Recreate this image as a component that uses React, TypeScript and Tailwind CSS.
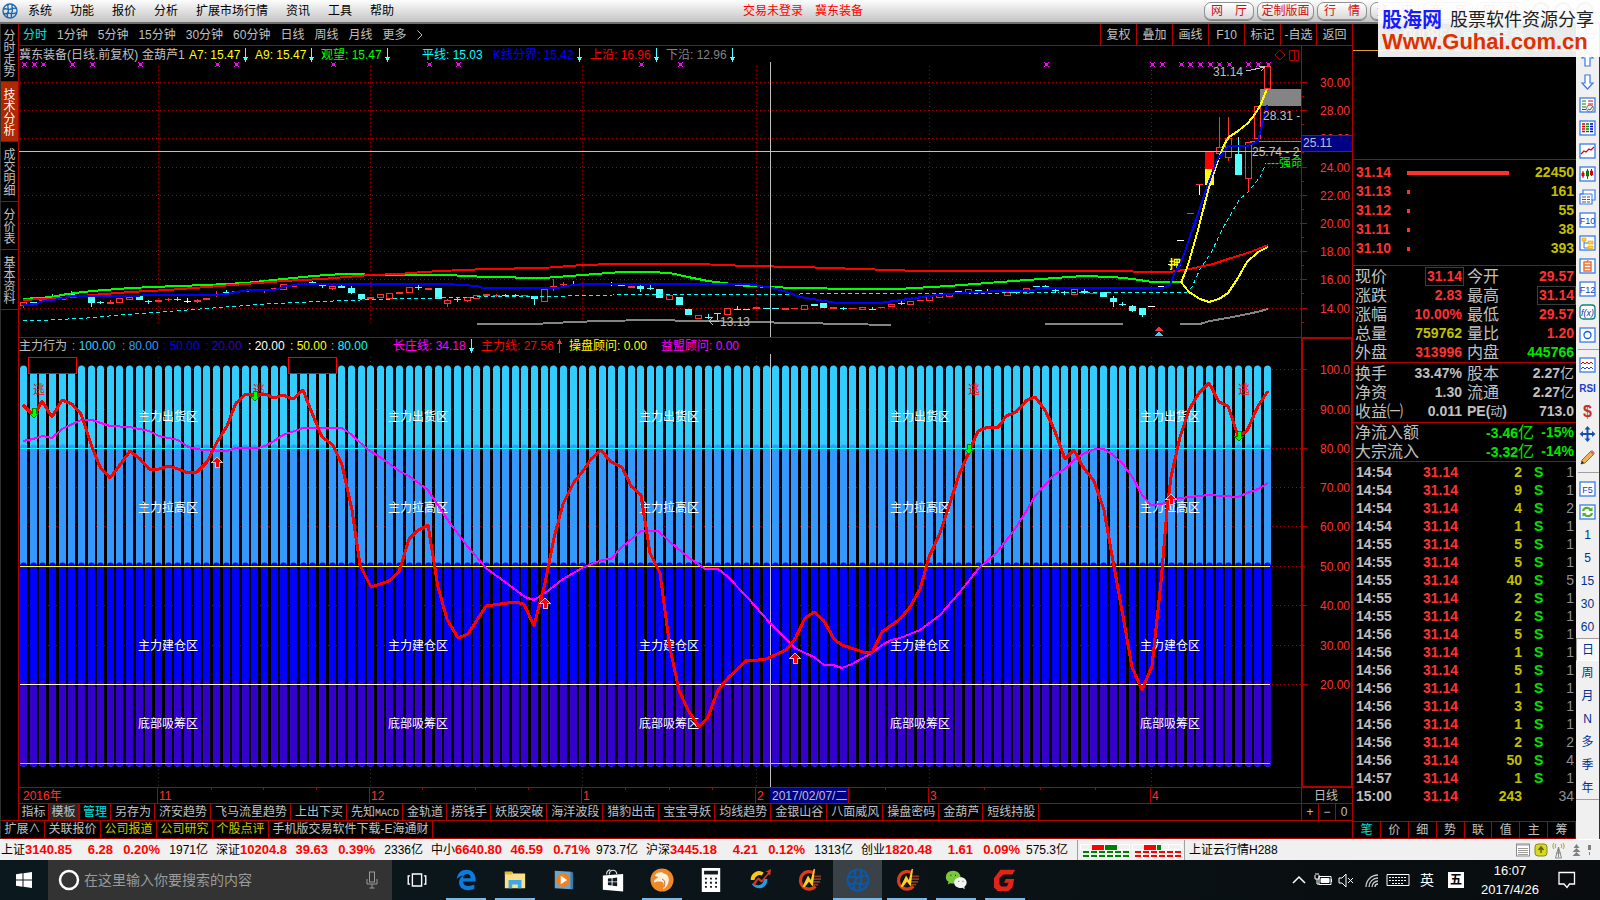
import React from "react";

const FONT = "font-['Liberation_Sans','Noto_Sans_CJK_SC',sans-serif]";

/* ---------- data ---------- */
const menus = ["系统", "功能", "报价", "分析", "扩展市场行情", "资讯", "工具", "帮助"];
const periods = ["分时", "1分钟", "5分钟", "15分钟", "30分钟", "60分钟", "日线", "周线", "月线", "更多"];
const chartTools = ["复权", "叠加", "画线", "F10", "标记", "-自选", "返回"];
const sideTabs = [
  { t: "分时走势", h: "h-[58px]", on: false },
  { t: "技术分析", h: "h-[60px]", on: true },
  { t: "成交明细", h: "h-[60px]", on: false },
  { t: "分价表", h: "h-[48px]", on: false },
  { t: "基本资料", h: "h-[60px]", on: false },
];
const templates = ["另存为", "济安趋势", "飞马流星趋势", "上出下买", "先知MACD", "金轨道", "捞钱手", "妖股突破", "海洋波段", "猎豹出击", "宝宝寻妖", "均线趋势", "金银山谷", "八面威风", "操盘密码", "金葫芦", "短线持股"];
const extras = [
  { t: "扩展∧", c: "text-[#c0c0c0] w-[44px]" },
  { t: "关联报价", c: "text-[#c0c0c0] w-[56px]" },
  { t: "公司报道", c: "text-[#c8c800] w-[56px]" },
  { t: "公司研究", c: "text-[#c8c800] w-[56px]" },
  { t: "个股点评", c: "text-[#c8c800] w-[56px]" },
  { t: "手机版交易软件下载-E海通财", c: "text-[#c0c0c0] w-[164px]" },
];
type Dir = "up" | "down" | undefined;
const topLegend: { t: string; c: string; d?: Dir }[] = [
  { t: "冀东装备(日线.前复权)", c: "w-[123px] text-[#c0c0c0]" },
  { t: "金葫芦1", c: "w-[47px] text-[#c0c0c0]" },
  { t: "A7: 15.47", c: "w-[66px] text-[#ffff00]", d: "down" },
  { t: "A9: 15.47", c: "w-[66px] text-[#ffff00]", d: "down" },
  { t: "观望: 15.47", c: "w-[101px] text-[#00ff00]", d: "down" },
  { t: "平线: 15.03", c: "w-[71px] text-[#00ffff]" },
  { t: "K线分界: 15.42", c: "w-[97px] text-[#0000ff]", d: "down" },
  { t: "上沿: 16.96", c: "w-[76px] text-[#ff0000]", d: "down" },
  { t: "下沿: 12.96", c: "w-[76px] text-[#848484]", d: "down" },
];
const lowLegend: { t: string; c: string; d?: Dir }[] = [
  { t: "主力行为", c: "w-[53px] text-[#c0c0c0]" },
  { t: ": 100.00", c: "w-[50px] text-[#33ccff]" },
  { t: ": 80.00", c: "w-[41px] text-[#3399ff]" },
  { t: ": 50.00", c: "w-[42px] text-[#0000ff]" },
  { t: ": 20.00", c: "w-[43px] text-[#3300cc]" },
  { t: ": 20.00", c: "w-[42px] text-[#ffffff]" },
  { t: ": 50.00", c: "w-[41px] text-[#ffff00]" },
  { t: ": 80.00", c: "w-[62px] text-[#00ffff]" },
  { t: "长庄线: 34.18", c: "w-[88px] text-[#ff00ff]", d: "down" },
  { t: "主力线: 27.56", c: "w-[88px] text-[#ff0000]", d: "up" },
  { t: "操盘顾问: 0.00", c: "w-[92px] text-[#ffff00]" },
  { t: "益盟顾问: 0.00", c: "w-[92px] text-[#ff00ff]" },
];

const book: [string, string, string][] = [
  ["31.14", "22450", "w-[102px]"],
  ["31.13", "161", "w-[3px]"],
  ["31.12", "55", "w-[3px]"],
  ["31.11", "38", "w-[3px]"],
  ["31.10", "393", "w-[3px]"],
];
const R = "text-[#ff3232]", Y = "text-[#c0c000]", G = "text-[#00e600]", W = "text-[#c0c0c0]";
const quotes: [string, string, string, boolean][] = [
  ["现价", "31.14", R, true], ["今开", "29.57", R, false],
  ["涨跌", "2.83", R, false], ["最高", "31.14", R, true],
  ["涨幅", "10.00%", R, false], ["最低", "29.57", R, false],
  ["总量", "759762", Y, false], ["量比", "1.20", R, false],
  ["外盘", "313996", R, false], ["内盘", "445766", G, false],
];
const basics: [string, string][] = [
  ["换手", "33.47%"], ["股本", "2.27亿"],
  ["净资", "1.30"], ["流通", "2.27亿"],
  ["收益㈠", "0.011"], ["PE(动)", "713.0"],
];
const ticks: [string, string, string, string][] = [
  ["14:54", "2", "S", "1"], ["14:54", "9", "S", "1"], ["14:54", "4", "S", "2"], ["14:54", "1", "S", "1"],
  ["14:55", "5", "S", "1"], ["14:55", "5", "S", "1"], ["14:55", "40", "S", "5"], ["14:55", "2", "S", "1"],
  ["14:55", "2", "S", "1"], ["14:56", "5", "S", "1"], ["14:56", "1", "S", "1"], ["14:56", "5", "S", "1"],
  ["14:56", "1", "S", "1"], ["14:56", "3", "S", "1"], ["14:56", "1", "S", "1"], ["14:56", "2", "S", "2"],
  ["14:56", "50", "S", "4"], ["14:57", "1", "S", "1"], ["15:00", "243", "", "34"],
];
const indices: string[][] = [
  ["上证", "3140.85", "6.28", "0.20%", "1971亿"],
  ["深证", "10204.8", "39.63", "0.39%", "2336亿"],
  ["中小", "6640.80", "46.59", "0.71%", "973.7亿"],
  ["沪深", "3445.18", "4.21", "0.12%", "1313亿"],
  ["创业", "1820.48", "1.61", "0.09%", "575.3亿"],
];

/* ---------- chart series ---------- */
const upperBand = "23,300 62,298 92,295 130,292 168,290 207,287 245,284 283,281 322,279 370,275 400,274 410,273 440,271 487,269 543,268 583,265 613,264 698,264 747,266 800,267 860,269 920,271 1000,271 1123,271 1143,272 1170,272 1190,269 1213,264 1228,259 1248,253 1268,245";
const greenLine = "23,299 52,297 67,294 92,291 130,288 177,286 207,285 245,283 283,279 313,276 342,274 360,274 370,275 390,275 447,275 487,277 543,278 583,275 622,272 650,272 670,273 688,277 708,281 747,286 773,287 793,288 860,289 898,289 949,286 1000,282 1027,280 1055,278 1083,276 1113,277 1133,279 1152,282 1181,282";
const blueLine = "23,305 33,305 43,301 60,299 72,296 213,295 227,294 236,292 250,290 275,290 283,287 300,284 370,284 447,284 477,286 483,288 557,288 573,285 583,284 747,284 773,288 790,293 800,297 837,303 880,303 929,296 959,293 1000,291 1027,291 1043,288 1163,288 1170,285 1173,277 1182,260 1193,228 1205,193 1217,160 1228,146 1248,146 1258,141 1267,105";
const yellowUp = "1181,283 1188,265 1198,230 1209,187 1218,160 1225,143 1229,137 1238,131 1248,123 1255,114 1260,106 1267,89";
const yellowLow = "1181,282 1189,292 1200,299 1209,302 1219,299 1228,293 1238,278 1247,262 1258,252 1268,247";
const flatLine = "23,320 50,320 87,318 120,315 147,313 187,310 213,308 240,306 267,304 307,302 360,300 393,299 477,297 507,296 567,296 613,295 657,294 800,294 1000,293 1060,292 1187,292 1192,287 1200,269 1211,253 1222,230 1228,219 1239,200 1249,191 1260,177 1266,163";
const lowerBands = [
  "477,324 533,324 573,322 602,321 650,320 747,322 800,323 891,325",
  "1045,324 1123,324",
  "1180,324 1200,324 1210,321 1233,317 1257,312 1268,309",
];
const mainForce = "23,405 34,416 42,401 52,417 62,400 72,404 81,414 92,447 100,467 110,478 120,465 130,451 140,459 149,469 159,469 169,466 178,469 188,473 197,472 207,462 217,442 227,426 236,403 246,394 255,395 265,394 274,398 283,395 293,399 303,390 312,413 322,437 333,445 342,465 352,510 360,565 371,587 389,581 399,572 409,539 417,531 428,525 438,587 447,619 458,638 468,634 486,606 515,602 524,604 534,626 545,583 554,538 563,504 574,482 583,471 591,459 601,450 611,462 622,467 631,486 641,495 650,553 660,573 670,648 679,690 688,710 699,727 708,717 718,690 729,677 747,660 758,660 766,659 786,650 795,639 805,618 814,612 824,621 834,639 842,645 863,652 872,653 882,632 900,619 910,607 920,589 929,557 940,533 950,503 959,475 969,452 978,431 988,427 997,428 1000,425 1006,416 1016,412 1027,400 1035,397 1045,410 1054,429 1065,459 1074,450 1083,467 1094,481 1104,510 1113,561 1123,616 1132,667 1142,690 1152,666 1161,582 1167,510 1171,477 1180,437 1189,410 1199,393 1209,383 1219,402 1228,406 1238,436 1247,431 1258,406 1268,391";
const longForce = "23,441 33,439 43,436 52,438 62,429 81,420 92,420 110,426 130,427 149,431 159,436 178,440 188,447 202,450 227,451 236,448 258,448 265,446 274,441 283,435 303,428 342,428 352,435 367,449 380,457 399,471 409,476 428,490 447,519 468,547 486,568 505,582 525,597 534,600 545,593 563,579 582,568 602,560 611,559 622,547 641,531 658,531 670,542 688,557 705,569 718,569 727,576 747,597 770,623 786,639 795,648 805,653 814,657 824,665 833,665 842,668 852,664 872,653 882,645 891,640 900,638 920,630 940,615 959,593 979,568 996,553 1013,532 1027,510 1035,496 1054,475 1065,469 1074,460 1083,454 1095,449 1104,449 1113,455 1123,464 1133,478 1142,495 1151,505 1162,504 1170,501 1180,498 1209,495 1238,497 1247,493 1258,489 1268,483";

/* [bar, open-top, close-bottom, kind, wick top, wick bottom]; h hollow, r red, c cyan, w white */
type Candle = [number, number, number, "h" | "r" | "c" | "w", number?, number?];
const candles: Candle[] = [
  [0, 302, 305, "h", 302, 308], [1, 302, 303, "c"], [2, 299, 301, "r"], [3, 296, 298, "c", 294, 299], [4, 298, 300, "r"], [5, 294, 295, "c", 291, 296],
  [7, 296, 303, "c", 296, 307], [8, 302, 303, "c", 301, 304], [9, 302, 304, "r", 300, 304], [10, 298, 302, "h"], [11, 297, 299, "h"], [12, 296, 300, "c"],
  [13, 301, 302, "c", 300, 304], [14, 300, 302, "r"], [15, 299, 300, "r", 298, 301], [16, 299, 300, "c", 297, 301], [17, 301, 302, "w", 298, 303], [18, 300, 302, "r", 299, 303],
  [19, 298, 300, "r"], [20, 295, 296, "r", 291, 297], [21, 292, 293, "c", 290, 295], [22, 291, 293, "r"], [23, 290, 292, "r"], [24, 289, 290, "c"], [25, 290, 291, "r", 289, 293],
  [26, 288, 289, "r"], [27, 284, 289, "h"], [28, 285, 287, "r"], [29, 283, 284, "r"], [30, 282, 284, "c", 281, 285], [31, 285, 286, "c", 284, 288], [32, 286, 288, "h", 286, 290],
  [33, 286, 288, "c", 285, 288], [34, 288, 293, "c", 286, 294], [35, 294, 299, "c"], [36, 297, 299, "r"], [37, 294, 297, "h"], [38, 293, 298, "h"], [39, 292, 294, "r"],
  [40, 287, 292, "h"], [41, 287, 288, "c", 285, 290], [42, 288, 290, "r"], [43, 288, 299, "c"], [44, 300, 303, "h", 299, 307],
  [45, 299, 300, "c", 297, 302], [46, 297, 300, "h", 297, 302], [47, 295, 298, "h"], [48, 294, 296, "r"], [49, 295, 296, "r", 294, 297], [50, 295, 296, "c", 294, 297], [51, 295, 296, "c", 294, 297], [52, 295, 296, "r"],
  [53, 296, 299, "c", 296, 305], [54, 289, 301, "h"], [55, 286, 287, "r", 279, 291], [56, 284, 285, "r", 282, 286], [57, 284, 285, "c", 281, 286], [60, 283, 284, "r"], [61, 283, 284, "w", 282, 286], [62, 285, 286, "c"],
  [63, 286, 288, "r"], [64, 286, 289, "c", 285, 292], [65, 288, 289, "c", 285, 290], [66, 289, 298, "c"], [67, 295, 299, "h", 295, 300], [68, 297, 305, "c"], [69, 309, 315, "c"], [70, 315, 318, "h"],
  [71, 317, 318, "c", 314, 319], [72, 313, 314, "c", 313, 320], [73, 308, 314, "h", 308, 315], [74, 309, 310, "c", 306, 310], [75, 309, 310, "c"], [76, 307, 309, "r"], [77, 308, 309, "c"], [78, 308, 309, "c"],
  [79, 308, 310, "r"], [80, 308, 309, "r"], [81, 305, 309, "h"], [82, 304, 306, "c"], [83, 303, 308, "c"], [84, 307, 309, "r"], [85, 308, 309, "c", 307, 310], [86, 308, 309, "r"], [87, 307, 309, "h"],
  [88, 309, 310, "c", 307, 310], [89, 307, 308, "r"], [90, 304, 306, "h"], [91, 303, 304, "c", 301, 305], [92, 301, 304, "h"], [93, 300, 301, "r"], [94, 296, 300, "h"], [95, 294, 297, "h"], [96, 293, 296, "h"],
  [97, 291, 293, "c"], [98, 289, 292, "h"], [99, 290, 291, "c"], [100, 291, 292, "c", 289, 293], [101, 290, 292, "r"], [102, 292, 295, "h"], [103, 292, 293, "c", 291, 294], [104, 288, 293, "h"], [105, 286, 287, "c"],
  [106, 286, 287, "c", 285, 288], [107, 290, 291, "c", 289, 293], [108, 292, 293, "c", 291, 295], [109, 289, 294, "h"], [110, 291, 293, "c", 289, 294], [111, 293, 294, "r", 292, 294], [112, 292, 297, "c"],
  [113, 298, 302, "c", 296, 307], [114, 304, 305, "c", 302, 306], [115, 306, 311, "c", 305, 312], [116, 308, 315, "c", 308, 317], [117, 306, 307, "w"], [118, 286, 287, "w"], [119, 264, 265, "w"], [120, 240, 241, "w"],
  [121, 213, 214, "r"], [122, 184, 185, "r"], [124, 147, 153, "h", 117, 157], [125, 138, 157, "h", 117, 161], [126, 154, 175, "c", 137, 175], [127, 142, 178, "h", 142, 191], [128, 106, 138, "h"], [129, 66, 88, "h"],
];
const barX = (i: number) => Math.round(23 + i * 9.643);
const marks = [24, 34, 43, 72, 92, 140, 217, 236, 333, 429, 458, 641, 680, 1046, 1152, 1162, 1181, 1190, 1200, 1210, 1219, 1229, 1248, 1258, 1268];
const monthX = [158, 370, 582, 756, 929, 1151];
const priceLevels: [number, string][] = [[82, "30.00"], [110, "28.00"], [138, "26.00"], [167, "24.00"], [195, "22.00"], [223, "20.00"], [251, "18.00"], [279, "16.00"], [308, "14.00"]];
const scoreLevels: [number, string][] = [[369, "100.0"], [409, "90.00"], [448, "80.00"], [487, "70.00"], [526, "60.00"], [566, "50.00"], [605, "40.00"], [645, "30.00"], [684, "20.00"]];
const zones: [number, string][] = [[421, "主力出货区"], [512, "主力拉高区"], [650, "主力建仓区"], [728, "底部吸筹区"]];
const kindColor = { h: "#ff3232", r: "#ff3232", c: "#54ffff", w: "#ffffff" };

/* ---------- small parts ---------- */
function Arrow({ d }: { d: Dir }) {
  if (!d) return null;
  return d === "down" ? (
    <svg viewBox="0 0 5 14" className="ml-[3px] h-[14px] w-[5px] shrink-0" shapeRendering="crispEdges" aria-hidden="true">
      <path d="M2 0h1v9h2v1h-1v2h-1v2h-1v-2h-1v-2h-1v-1h2z" fill="#54ffff" />
    </svg>
  ) : (
    <svg viewBox="0 0 5 14" className="ml-[3px] h-[14px] w-[5px] shrink-0" shapeRendering="crispEdges" aria-hidden="true">
      <path d="M2 14h1v-9h2v-1h-1v-2h-1v-2h-1v2h-1v2h-1v1h2z" fill="#ff3232" />
    </svg>
  );
}

function Legend({ items }: { items: { t: string; c: string; d?: Dir }[] }) {
  return (
    <div className="flex min-w-0 flex-1 items-center overflow-hidden text-xs leading-4 whitespace-nowrap">
      {items.map((l, i) => (
        <span key={i} className={"flex shrink-0 items-center " + l.c}>{l.t}<Arrow d={l.d} /></span>
      ))}
    </div>
  );
}

function HaitongLogo({ className, color }: { className: string; color: string }) {
  return (
    <svg viewBox="0 0 24 24" className={className} fill="none" stroke={color} strokeWidth="2" aria-hidden="true">
      <circle cx="12" cy="12" r="10.5" />
      <path d="M9.500 2c-2.500 4 1 6 0 10s-3 6-1 9.500M15.500 2.500c-2 4 1 6 0 9.500s-3 6-1 10M2 9.500c4-2.500 6 1 10 0s6-3 10-1M2 15.500c4 2 6-1 10 0s6 1 9.500-1" />
    </svg>
  );
}

function PriceChart() {
  return (
    <svg viewBox="19 62 1334 275" className="block h-auto w-full" fontSize="12" shapeRendering="crispEdges" role="img" aria-label="日线">
      <g stroke="#b00000" strokeDasharray="1 3">
        {priceLevels.map(([y]) => <line key={y} x1="20" x2="1301" y1={y + 0.5} y2={y + 0.5} />)}
        {monthX.map((x) => <line key={x} x1={x + 0.5} x2={x + 0.5} y1="66" y2="324" />)}
      </g>
      <rect x="1260" y="89" width="41" height="17" fill="#848484" />
      <line x1="1250" x2="1301" y1="141.5" y2="141.5" stroke="#848484" />
      {marks.map((x) => (
        <path key={x} d={`M${x - 2} 62h1v1h-1zM${x + 2} 62h1v1h-1zM${x - 1} 63h3v3h-3zM${x - 2} 66h1v1h-1zM${x + 2} 66h1v1h-1z`} fill="#ff00ff" />
      ))}
      {lowerBands.map((p) => <polyline key={p} points={p} fill="none" stroke="#848484" strokeWidth="2" />)}
      {candles.map(([i, a, b, k, wt, wb]) => {
        const x = barX(i);
        const c = kindColor[k];
        return (
          <g key={i}>
            {wt !== undefined && wb !== undefined && (
              <>
                <line x1={x + 0.5} x2={x + 0.5} y1={wt} y2={a} stroke={c} />
                <line x1={x + 0.5} x2={x + 0.5} y1={b} y2={wb} stroke={c} />
              </>
            )}
            {k === "h" ? (
              <rect x={x - 2.5} y={a + 0.5} width="6" height={b - a} fill="none" stroke={c} />
            ) : (
              <rect x={x - 3} y={a} width="7" height={b - a} fill={c} />
            )}
          </g>
        );
      })}
      <rect x="1205" y="152" width="9" height="17" fill="#ff0000" />
      <rect x="1205" y="169" width="9" height="16" fill="#ffff00" />
      <line x1="1199.5" x2="1199.5" y1="185" y2="195" stroke="#fff" />
      <text x="1169" y="269" fill="#ffff00" fontWeight="700">押</text>
      <g fill="none" strokeWidth="2">
        <polyline points={flatLine} stroke="#00ffff" strokeWidth="1" strokeDasharray="4 3" />
        <polyline points={greenLine} stroke="#00ff00" />
        <polyline points={upperBand} stroke="#ff0000" />
        <polyline points={yellowLow} stroke="#ffff00" />
        <polyline points={yellowUp} stroke="#ffff00" />
        <polyline points={blueLine} stroke="#0000ff" />
      </g>
      <line x1="19" x2="1301" y1="151.5" y2="151.5" stroke="#c0c0c0" />
      <line x1="770.5" x2="770.5" y1="62" y2="337" stroke="#c0c0c0" />
      <g fill="#c0c0c0">
        <text x="1213" y="76">31.14</text>
        <text x="1263" y="120">28.31 -</text>
        <text x="1252" y="156">25.74 - 2</text>
        <text x="720" y="326">13.13</text>
      </g>
      <g stroke="#c0c0c0" fill="none">
        <path d="M1246 71l19-4M1259 66l6 1l-4 4" />
        <path d="M709 321h10M713 317l-4 4l4 4" />
      </g>
      <text x="1267" y="167" fill="#00ff00">---强命</text>
      <path d="M1155 331l4-5l4 5z" fill="#ff3232" />
      <path d="M1155 336l4-5l4 5z" fill="#33ccff" />
      <rect x="1302" y="62" width="50" height="275" fill="#000" />
      <g stroke="#b00000">
        <line x1="1301.5" x2="1301.5" y1="62" y2="337" />
        <line x1="1352.5" x2="1352.5" y1="62" y2="337" />
        {priceLevels.map(([y]) => (
          <path key={y} d={`M1301 ${y + 0.5}h6M1301 ${y + 14.5}h3`} />
        ))}
      </g>
      <g fill="#ff3232" textAnchor="end">
        {priceLevels.map(([y, t]) => <text key={t} x="1350" y={y + 5}>{t}</text>)}
      </g>
      <rect x="1301.5" y="135.5" width="51" height="16" fill="#000084" stroke="#b00000" />
      <text x="1303" y="147" fill="#c0c0c0">25.11</text>
    </svg>
  );
}

function ForceChart() {
  const bars = Array.from({ length: 130 }, (_, i) => barX(i) + 0.5);
  const layers: [number, string][] = [[369, "#33ccff"], [448, "#3399ff"], [566, "#0000ff"], [684, "#3300cc"]];
  const minor = [211, 263, 316, 422, 475, 528, 625, 669, 712, 885, 984, 1040, 1095];
  const months = ["11", "12", "1", "2", "3", "4"];
  return (
    <svg viewBox="19 354 1334 449" className="block h-auto w-full" fontSize="12" shapeRendering="crispEdges" role="img" aria-label="主力行为">
      <g stroke="#b00000" strokeDasharray="1 3">
        {scoreLevels.map(([y]) => <line key={y} x1="20" x2="1301" y1={y + 0.5} y2={y + 0.5} />)}
        {monthX.map((x) => <line key={x} x1={x + 0.5} x2={x + 0.5} y1="357" y2="787" />)}
      </g>
      {layers.map(([y, c]) => (
        <g key={c} stroke={c} strokeWidth="7" strokeLinecap="round" shapeRendering="geometricPrecision">
          {bars.map((x) => <line key={x} x1={x} x2={x} y1={y} y2="763" />)}
        </g>
      ))}
      <line x1="20" x2="1270" y1="448.5" y2="448.5" stroke="#00ffff" />
      <line x1="20" x2="1270" y1="566.5" y2="566.5" stroke="#ffff00" />
      <line x1="20" x2="1270" y1="684.5" y2="684.5" stroke="#ffffff" />
      <line x1="20" x2="1270" y1="763.5" y2="763.5" stroke="#c0c0c0" />
      <rect x="28.5" y="357.5" width="48" height="16" fill="#000" stroke="#ff0000" />
      <rect x="288.5" y="357.5" width="48" height="16" fill="#000" stroke="#ff0000" />
      <g fill="#ffffff">
        {[138, 388, 639, 890, 1140].map((x) => zones.map(([y, t]) => <text key={x + t} x={x} y={y}>{t}</text>))}
      </g>
      <g fill="#ff0000">
        {[33, 253, 968, 1238].map((x) => <text key={x} x={x} y="394">逃</text>)}
      </g>
      <line x1="770.5" x2="770.5" y1="354" y2="787" stroke="#c0c0c0" />
      <polyline points={longForce} fill="none" stroke="#ff00ff" strokeWidth="2" />
      <polyline points={mainForce} fill="none" stroke="#ff0000" strokeWidth="3" strokeLinejoin="round" />
      {[[34, 413], [255, 396], [969, 449], [1239, 436]].map(([x, y]) => (
        <path key={x} d={`M${x - 2} ${y - 5}h4v5h3l-5 5l-5 -5h3z`} fill="#00ff00" stroke="#008000" />
      ))}
      {[[217, 462], [545, 603], [795, 658], [1171, 499]].map(([x, y]) => (
        <path key={x} d={`M${x - 2} ${y + 5}h4v-5h3l-5 -5l-5 5h3z`} fill="#ff0000" stroke="#e0c0c0" />
      ))}
      <g stroke="#b00000">
        <line x1="1302" x2="1302" y1="354" y2="788" strokeWidth="2" />
        <line x1="1352" x2="1352" y1="354" y2="788" strokeWidth="2" />
        <line x1="1301" x2="1353" y1="787" y2="787" strokeWidth="2" />
        {scoreLevels.map(([y], i) => <path key={y} d={`M1303 ${y + 0.5}h${i % 2 ? 2 : 4}`} />)}
        <line x1="19" x2="1353" y1="787.5" y2="787.5" />
        <line x1="1301.5" x2="1301.5" y1="787" y2="803" />
        <line x1="1352.5" x2="1352.5" y1="787" y2="803" />
        {monthX.map((x) => <line key={x} x1={x - 0.5} x2={x - 0.5} y1="787" y2="803" />)}
        {minor.map((x) => <line key={x} x1={x + 0.5} x2={x + 0.5} y1="787" y2="790" />)}
      </g>
      <g fill="#ff3232" textAnchor="end">
        {scoreLevels.map(([y, t]) => <text key={t} x="1350" y={y + 5}>{t}</text>)}
      </g>
      <rect x="770" y="788" width="78" height="15" fill="#000084" />
      <line x1="848.5" x2="848.5" y1="787" y2="803" stroke="#b00000" />
      <text x="772" y="800" fill="#c0c0c0">2017/02/07/二</text>
      <g fill="#ff3232">
        <text x="23" y="800">2016年</text>
        {months.map((m, i) => <text key={m} x={monthX[i] + 1} y="800">{m}</text>)}
      </g>
      <text x="1326" y="800" fill="#c0c0c0" textAnchor="middle">日线</text>
    </svg>
  );
}

/* ---------- right tool strip ---------- */
const Frame = ({ children }: { children?: React.ReactNode }) => (
  <>
    <rect x="1" y="1" width="15" height="14" fill="#fff" stroke="#3a7be8" strokeWidth="1.3" />
    {children}
  </>
);
const label = (t: string) => (
  <Frame><text x="8.5" y="11.5" fontSize="9" textAnchor="middle" fill="#1040c0">{t}</text></Frame>
);
const outline = { fill: "#fff", stroke: "#3a7be8", strokeWidth: 1.2 };
const stripTop: [string, React.ReactNode][] = [
  ["后退", <path d="M1 8l6-6v3.500h8v5h-8v3.500z" {...outline} />],
  ["上移", <path d="M8.500 1l5.500 6h-3v8h-5v-8h-3z" {...outline} />],
  ["下移", <path d="M8.500 15l5.500-6h-3v-8h-5v8h-3z" {...outline} />],
  ["列表", <Frame><path d="M3 4h4M3 7h4M3 10h4M3 12.500h4" stroke="#008000" /><path d="M9 4h5M9 7h5" stroke="#e00000" /><circle cx="11" cy="11.500" r="3.500" fill="#eee" stroke="#777" /><path d="M9 12l2 1l3-4" stroke="#555" fill="none" /></Frame>],
  ["报价", <Frame><path d="M3 4h3M3 6.500h3M3 9h3M3 11.500h3" stroke="#e00000" strokeWidth="1.400" /><path d="M7 4h3M7 6.500h3M7 9h3M7 11.500h3" stroke="#008000" strokeWidth="1.400" /><path d="M11 4h3M11 6.500h3M11 9h3M11 11.500h3" stroke="#0000e0" strokeWidth="1.400" /></Frame>],
  ["走势", <Frame><path d="M2 11l3-3l2 1l3-3l2 1l3-3" stroke="#e00000" strokeWidth="1.200" fill="none" /></Frame>],
  ["K线", <Frame><path d="M4 5v7M12.500 3v7" stroke="#e00000" /><path d="M8.500 3v10" stroke="#008000" /><path d="M3 7h2v3h-2zM11.500 5h2v4h-2z" fill="#e00000" stroke="#e00000" /><path d="M7.500 5h2v5h-2z" fill="#008000" stroke="#008000" /></Frame>],
  ["资讯", <><path d="M4 1h12v10h-3v4h-12v-10h3z" {...outline} /><path d="M1 5h12v6" fill="none" stroke="#3a7be8" /><path d="M3 8h4M8 8h3M3 10.500h4M8 10.500h3M3 13h4M8 13h3" stroke="#555" /></>],
  ["F10", label("F10")],
  ["目录", <Frame><path d="M5 5v8h4M5 8h4" stroke="#3a7be8" fill="none" /><path d="M3 3h4v3h-4zM9 6h5v3h-5zM9 11h5v2.500h-5z" fill="#ffd040" stroke="#e0a000" strokeWidth=".6" /></Frame>],
  ["自选", <Frame><path d="M5 4h7v9h-7zM5 7h7M5 10h7M8 4l1-2" stroke="#f07030" strokeWidth="1.500" fill="none" /></Frame>],
  ["F12", label("F12")],
  ["函数", <><rect x="1" y="1" width="15" height="14" rx="3" fill="#fff" stroke="#108080" strokeWidth="1.300" /><text x="8.500" y="11.500" fontSize="9" fontStyle="italic" textAnchor="middle" fill="#1030b0">f(x)</text></>],
  ["圆", <Frame><circle cx="8.500" cy="8" r="3.500" fill="none" stroke="#1060d0" strokeWidth="1.300" /></Frame>],
];
const stripMid: [string, React.ReactNode][] = [
  ["指标", <Frame><path d="M2 7l2-2l2 2l2-2l2 2l2-2l2 2" stroke="#e00000" fill="none" /><path d="M2 12l2-2l2 2l2-2l2 2l2-2l2 2" stroke="#2040e0" fill="none" /></Frame>],
  ["RSI", <text x="8.500" y="12" fontSize="10" fontWeight="700" textAnchor="middle" fill="#2040d0">RSI</text>],
  ["资金", <><text x="9.500" y="14.500" fontSize="16" fontWeight="700" textAnchor="middle" fill="#808080" aria-hidden="true" opacity="0" /><text x="8.500" y="14" fontSize="16" fontWeight="700" textAnchor="middle" fill="#c03030">$</text></>],
  ["移动", <path d="M8.500 0l3 3.500h-2v3.500h3.500v-2l3.500 3l-3.500 3v-2h-3.500v3.500h2l-3 3.500l-3-3.500h2v-3.500h-3.500v2l-3.500-3l3.500-3v2h3.500v-3.500h-2z" fill="#1850b0" />],
  ["画线", <><path d="M2 15l1-4l9-9l3 3l-9 9z" fill="#f0b050" stroke="#805020" strokeWidth=".8" /><path d="M11 3l2-2l3 3l-2 2z" fill="#d07070" /><path d="M2 15l1-3l2 2z" fill="#222" /></>],
];
const stripLow: [string, React.ReactNode][] = [
  ["F5", label("F5")],
  ["刷新", <Frame><path d="M4 7c1-4 6-4 8-1M13 9c-1 4-6 4-8 1" stroke="#50b030" strokeWidth="2.200" fill="none" /><path d="M13.500 3v4h-4zM3.500 13v-4h4z" fill="#50b030" /></Frame>],
];
const stripText = ["1", "5", "15", "30", "60", "日", "周", "月", "N", "多", "季", "年"];

function StripButton({ name, children }: { name: string; children: React.ReactNode }) {
  return (
    <button aria-label={name} className="flex h-[23px] w-full items-center justify-center">
      <svg viewBox="0 0 17 16" className="h-4 w-[17px]">{children}</svg>
    </button>
  );
}

function ToolStrip() {
  return (
    <nav className="flex w-6 shrink-0 flex-col border-r border-[#303030] bg-[#f0f0f0]" aria-label="工具条">
      {stripTop.map(([n, g]) => <StripButton key={n} name={n}>{g}</StripButton>)}
      <div className="my-[3px] ml-0.5 h-px bg-[#a0a0a0]" />
      {stripMid.map(([n, g]) => <StripButton key={n} name={n}>{g}</StripButton>)}
      <div className="my-1 ml-0.5 h-px bg-[#a0a0a0]" />
      {stripLow.map(([n, g]) => <StripButton key={n} name={n}>{g}</StripButton>)}
      {stripText.map((t) => (
        <button key={t} className={"h-[23px] w-full text-xs text-[#003090] " + (t === "日" ? "border-y border-l border-t-[#a0a0a0] border-b-white border-l-[#a0a0a0] bg-[#f8f8f8]" : "")}>{t}</button>
      ))}
      <div className="h-px bg-[#a0a0a0]" />
    </nav>
  );
}

/* ---------- quote panel ---------- */
function QuotePanel() {
  return (
    <aside className="flex w-[223px] shrink-0 flex-col bg-black text-sm font-bold">
      <div className="h-[136px] border-b border-[#b00000]">
        <div className="h-[27px] border-b border-[#e0a030] text-center text-base leading-6 font-normal text-[#00c0c0]">
          <span className="text-[#c0c000]">000856</span> 冀东装备
        </div>
      </div>
      <ul className="h-[106px] border-b border-[#b00000] pt-[3px]">
        {book.map(([p, v, w]) => (
          <li key={p} className="flex h-[19px] items-center pr-0.5 pl-[3px] leading-[19px]">
            <span className={"w-[51px] " + R}>{p}</span>
            <span className={"h-1 bg-[#ff3232] " + w} />
            <span className={"ml-auto " + Y}>{v}</span>
          </li>
        ))}
      </ul>
      <div className="grid h-[97px] grid-cols-2 content-start gap-x-[3px] border-b border-[#b00000] pt-px pl-0.5">
        {quotes.map(([l, v, c, box]) => (
          <div key={l} className="flex h-[19px] items-center justify-between">
            <span className="text-base leading-[19px] font-normal text-[#c0c0c0]">{l}</span>
            <span className={"border px-px leading-[17px] " + c + (box ? " border-[#3c3c3c]" : " border-transparent")}>{v}</span>
          </div>
        ))}
      </div>
      <div className="grid h-[60px] grid-cols-2 content-start gap-x-[3px] border-b border-[#b00000] pt-px pl-0.5">
        {basics.map(([l, v]) => (
          <div key={l} className={"flex h-[19px] items-center justify-between pr-0.5 whitespace-nowrap " + W}>
            {l === "PE(动)" ? (
              <span className="leading-[19px]">PE(<span className="text-xs font-normal">动</span>)</span>
            ) : (
              <span className="text-base leading-[19px] font-normal">{l}</span>
            )}
            <span className="leading-[19px]">{v.replace("亿", "")}{v.endsWith("亿") && <span className="font-normal">亿</span>}</span>
          </div>
        ))}
      </div>
      <div className="h-[39px] border-b border-[#b00000]">
        {[["净流入额", "-3.46", "-15%"], ["大宗流入", "-3.32", "-14%"]].map(([l, v, p]) => (
          <div key={l} className={"flex h-[19px] items-center pr-0.5 pl-0.5 leading-[19px] " + G}>
            <span className="flex-1 text-base leading-[19px] font-normal text-[#c0c0c0]">{l}</span>
            <span>{v}<span className="text-base leading-[19px] font-normal">亿</span></span>
            <span className="w-10 text-right">{p}</span>
          </div>
        ))}
      </div>
      <div className="flex-1 pt-px">
        <table className="w-full table-fixed border-collapse leading-[18px]">
          <tbody>
            {ticks.map(([t, v, s, n], i) => (
              <tr key={i} className="h-[18px]">
                <td className={"w-[70px] p-0 pl-[3px] " + W}>{t}</td>
                <td className={"w-[50px] p-0 " + R}>31.14</td>
                <td className={"w-[49px] p-0 text-right " + Y}>{v}</td>
                <td className={"w-[32px] p-0 pl-3 " + G}>{s}</td>
                <td className="p-0 pr-0.5 text-right font-normal text-[#909090]">{n}</td>
              </tr>
            ))}
          </tbody>
        </table>
      </div>
      <div className="flex h-[18px] border-y border-[#b00000] text-xs leading-4 font-normal">
        {["笔", "价", "细", "势", "联", "值", "主", "筹"].map((t, i) => (
          <button key={t} className={"flex-1 border-r border-[#b00000] " + (i === 0 ? "text-[#00e0e0]" : "text-[#c0c0c0]")}>{t}</button>
        ))}
      </div>
    </aside>
  );
}

/* ---------- status bar ---------- */
function Meter({ tone, a, b }: { tone: string; a: number; b: number }) {
  return (
    <svg viewBox="0 0 50 14" className="h-[14px] w-[50px]" shapeRendering="crispEdges" aria-hidden="true">
      <path d="M.5 1.500h49v5h-49zM12.500 1.500v5M36.500 1.500v5" fill="none" stroke="#fff" />
      <rect x="12" y="2" width={a} height="5" fill="#ff0000" />
      <rect x={13 + a} y="2" width={b} height="5" fill="#008000" />
      {[0, 1].map((r) => [0, 1, 2, 3, 4, 5].map((c) => <rect key={`${r}${c}`} x={3 + c * 8} y={8 + r * 4} width="6" height="2" fill={tone} />))}
    </svg>
  );
}

function StatusBar() {
  return (
    <div className="flex h-[21px] items-center border-t border-white bg-[#f0f0f0] pl-px text-xs leading-5 whitespace-nowrap text-black">
      {indices.map(([n, p, d, r, a]) => (
        <div key={n} className="flex w-[215px] shrink-0">
          <span className="flex-1">{n}<b className="text-[13px] text-[#ff0000]">{p}</b></span>
          <b className="w-[36px] text-right text-[13px] text-[#ff0000]">{d}</b>
          <b className="w-[47px] text-right text-[13px] text-[#ff0000]">{r}</b>
          <span className="w-[56px] pr-2 text-right">{a}</span>
        </div>
      ))}
      <div className="ml-px flex h-full items-center gap-0.5 border-x border-[#a0a0a0] px-0.5">
        <Meter tone="#008000" a={12} b={12} />
        <Meter tone="#ff0000" a={12} b={4} />
      </div>
      <span className="ml-1 flex-1">上证云行情H288</span>
      <svg viewBox="0 0 84 18" className="h-[18px] w-[84px]" aria-hidden="true">
        <rect x=".5" y="3" width="13" height="12" fill="#fff" stroke="#888" />
        <path d="M.5 4h13M2 7.500h10M2 9.500h10M2 11.500h10M2 13.500h10" stroke="#999" />
        <rect x="19" y="3" width="12" height="12" rx="3" fill="#d8d820" stroke="#888810" />
        <path d="M25 12v-5M22.500 9l2.500-3l2.500 3" stroke="#606000" strokeWidth="1.500" fill="none" />
        <path d="M42.500 6l-3 11h6zM40 12h5M42.500 7v9" stroke="#888" fill="none" />
        <path d="M38 2c-1.500 2-1.500 4 0 6M47 2c1.500 2 1.500 4 0 6M40 3c-1 1.500-1 3 0 4M45 3c1 1.500 1 3 0 4" stroke="#a0a030" fill="none" />
        <path d="M60.500 3l3 4h-6zM60.500 7l4 4h-8zM60.500 11l4 4h-8z" fill="#808080" />
        <path d="M72 4h3v5h-3zM73 11h1v3h-1z" fill="#808080" />
      </svg>
    </div>
  );
}

/* ---------- task bar ---------- */
const swirl = (
  <>
    <path d="M18.500 5.500A9.500 9.500 0 1 0 20 20" fill="none" stroke="#e03a18" strokeWidth="3.500" />
    <path d="M16 9h10M16 12h10M16 15h9M16 18h7" stroke="#8a3a28" strokeWidth="2" />
    <path d="M6 20l6-12l3 5l3-12l1.500 0l-2.500 19l-4-5l-5 6z" fill="#ffd020" />
  </>
);
const apps: [string, string, React.ReactNode][] = [
  ["任务视图", "", <g fill="none" stroke="#fff" strokeWidth="1.500"><path d="M8 6.500h10v13h-10zM5.500 8.500h-2v9h2M20.500 8.500h2v9h-2" /></g>],
  ["Edge", "w-10", <path d="M3 12C4 5 8 2 13.500 2C20 2 24 7 23.500 14.500H9.500C10 18 12.500 19.500 15.500 19.500C18.500 19.500 21 18.500 22 18V22.500C20 23.600 17.500 24 15 24C9 24 5.500 20.500 5.500 15.500C5.500 12 7.500 9.500 10.500 8C7 8.500 4.500 10 3 12ZM9.800 11H18C18 8 16.500 6.500 14 6.500C11.500 6.500 10 8.500 9.800 11Z" fill="#0a7ce0" fillRule="evenodd" />],
  ["文件资源管理器", "w-10", <><path d="M2 4h8l1 2h13v16h-22z" fill="#fbe08a" /><path d="M2 4h8v3h-8z" fill="#e8b83c" /><path d="M6 13h14v9h-4v-4h-6v4h-4z" fill="#3fa8ea" /></>],
  ["媒体", "", <><path d="M3 3l18 1v19l-18-1z" fill="#68a8d0" /><path d="M20 4l3 1v18l-3 0z" fill="#3a7aa8" /><circle cx="12" cy="13" r="7.500" fill="#f08020" /><path d="M9.500 8.500l7 4.500l-7 4.500z" fill="#fff" /></>],
  ["应用商店", "", <><path d="M2 8l22-1.500v19l-22-2z" fill="#fff" /><path d="M9 7c0-6 8-6 8-.5M6 7c0-4 3-5 4-5" fill="none" stroke="#ddd" strokeWidth="1.300" /><path d="M7.500 11.500l4-.5v3.500h-4zM12.500 11l5-.6v4.100h-5zM7.500 15.500h4v3.500l-4-.5zM12.500 15.500h5v4.200l-5-.6z" fill="#101820" /></>],
  ["浏览器", "w-10", <><circle cx="13" cy="13" r="12.500" fill="#f08a28" /><path d="M5 8c3-4 8-4 10-2c5 1 7 6 4 12c-1 3-3 4-5 5c2-4 1-7-1-8c-3 0-5-1-8 1c-1-1-1-2 0-3l4-3z" fill="#fff2e0" /><path d="M13 12c3 1 4 4 2 9" stroke="#c05a10" fill="none" /></>],
  ["计算器", "", <><rect x="3" y="0" width="20" height="26" fill="#fff" /><path d="M5.500 3h15v4h-15z" fill="#101820" /><path d="M6.500 11.500h2M12 11.500h2M17.500 11.500h2M6.500 16h2M12 16h2M17.500 16h2M6.500 20.500h2M12 20.500h2M17.500 20.500h2" stroke="#101820" strokeWidth="2" /></>],
  ["行情", "", <><path d="M3 13a9 9 0 0 1 14-8l-2 3a6 6 0 0 0-8 5z" fill="#ffc814" /><path d="M4 17a9 9 0 0 0 17-5h-4a6 6 0 0 1-10 5z" fill="#20a0e8" /><path d="M5 17l6-7l4 3l7-8l-3-1l6-3l-1 7l-2-1l-7 9l-4-3l-4 6z" fill="#e83020" /></>],
  ["交易一", "", swirl],
  ["海通", "w-full", null],
  ["交易二", "w-10", swirl],
  ["微信", "w-10", <><path d="M10 3c-5 0-8 3-8 7c0 2 1 4 3 5l-1 3l3-1.500c6 1.500 11-1.500 11-6.500c0-4-4-7-8-7z" fill="#7cc83c" /><path d="M18 10c-4 0-7 2.500-7 6s4 6.500 9 5.500l2.500 1.500l-.5-2.500c5-4 2-10.500-4-10.500z" fill="#f4f4f4" /><path d="M7 8h1M12 8h1" stroke="#204010" strokeWidth="1.500" /><path d="M15.500 14.500h1M20 14.500h1" stroke="#666" strokeWidth="1.300" /></>],
  ["同花顺", "w-10", <path d="M24 2l-3 5h-10l-4 4v7l2 2h6l2-4h-5l2-4h9l-2 9l-4 4h-12l-4-4v-10l7-9h9z" fill="#e02418" />],
];

function TaskBar() {
  return (
    <footer className="flex h-10 items-stretch bg-gradient-to-r from-[#0b191f] via-[#0b1418] to-[#080c0e] text-white">
      <button aria-label="开始" className="flex w-12 items-center justify-center">
        <svg viewBox="0 0 16 16" className="h-4 w-4"><path d="M0 2.200l6.500-.9v6.200h-6.500zM7.500 1.200l8.500-1.200v7.500h-8.500zM0 8.500h6.500v6.200l-6.500-.9zM7.500 8.500h8.500v7.500l-8.500-1.200z" fill="#fff" /></svg>
      </button>
      <label className="flex w-[344px] items-center bg-[#333333] px-2.5">
        <svg viewBox="0 0 22 22" className="h-[22px] w-[22px] shrink-0" aria-hidden="true"><circle cx="11" cy="11" r="9" fill="none" stroke="#fff" strokeWidth="2.500" /></svg>
        <input aria-label="搜索" placeholder="在这里输入你要搜索的内容" className="ml-1 min-w-0 flex-1 bg-transparent text-sm placeholder:text-[#9a9a9a]" />
        <svg viewBox="0 0 12 18" className="mr-1 h-[18px] w-3" fill="none" stroke="#9a9a9a" aria-hidden="true"><rect x="3.500" y="1" width="5" height="10" /><path d="M1 8v5h10v-5M6 13v4M3.500 17h5" /></svg>
      </label>
      {apps.map(([n, w, g]) => (
        <button key={n} aria-label={n} className={"flex w-[49px] flex-col items-center justify-between " + (n === "海通" ? "bg-[#3a4247]" : "")}>
          {g ? <svg viewBox="0 0 26 26" className="mt-2 h-6 w-6">{g}</svg> : <HaitongLogo className="mt-2 h-6 w-6" color="#0c58a8" />}
          <span className={"h-0.5 " + (w ? "bg-[#76b9ed] " + w : "")} />
        </button>
      ))}
      <div className="ml-auto flex items-center">
        <svg viewBox="0 0 120 20" className="h-5 w-[120px]" fill="none" stroke="#fff" aria-hidden="true">
          <path d="M1 13l6-6l6 6" strokeWidth="1.500" />
          <path d="M27 6.500h12v8h-12z" /><path d="M29 8.500h8v4h-8z" fill="#fff" /><path d="M39.500 9v3M23 5v4h4v-4M24 3v2M26 3v2M25 9v5h2" />
          <path d="M47 8h3l4-4v13l-4-4h-3zM56 8l5 5M61 8l-5 5" />
          <path d="M74 17a12 12 0 0 1 12-12M77 17a9 9 0 0 1 9-9M80 17a6 6 0 0 1 6-6M83 17a3 3 0 0 1 3-3" strokeWidth="1.300" stroke="#ccc" />
          <path d="M95 4.500h22v11h-22z" /><path d="M97 7.500h18M97 10.500h18M100 13.500h12" strokeDasharray="2 1" />
        </svg>
        <span className="ml-2 text-sm">英</span>
        <span className="ml-[14px] h-4 w-4 bg-white text-center text-xs leading-4 font-bold text-black">五</span>
        <div className="ml-4 w-[60px] text-center text-[13px] leading-[19px]">
          <div>16:07</div>
          <div>2017/4/26</div>
        </div>
        <button aria-label="操作中心" className="ml-[18px] mr-6">
          <svg viewBox="0 0 18 18" className="h-[18px] w-[18px]" fill="none" stroke="#fff" strokeWidth="1.300"><path d="M1 1.500h15.500v11.500h-5l-2.500 3.500l-3-3.500h-5z" /></svg>
        </button>
      </div>
    </footer>
  );
}

/* ---------- page ---------- */
export default function App() {
  return (
    <div className={"relative min-h-screen min-w-[1300px] overflow-hidden bg-black " + FONT}>
      <header className="relative flex h-6 items-center border-b-2 border-[#707070] bg-gradient-to-b from-[#fdfdfd] to-[#c4c4c4] pl-0.5 text-xs text-black">
        <HaitongLogo className="h-4 w-4" color="#1a66b0" />
        <nav className="ml-2.5 flex gap-[18px]">
          {menus.map((m) => <button key={m} className="whitespace-nowrap">{m}</button>)}
        </nav>
        <div className="flex flex-1 justify-center gap-3 pl-2 text-[#ff0000]">
          <span>交易未登录</span><span>冀东装备</span>
        </div>
        <div className="flex gap-[3px]">
          {[["网　厅", "w-[50px]"], ["定制版面", "w-[57px]"], ["行　情", "w-[50px]"], ["资　讯", "w-[50px]"], ["商　品", "w-[50px]"], ["网　站", "w-[50px]"]].map(([t, w]) => (
            <button key={t} className={"h-[18px] rounded-[7px] border border-[#909090] bg-gradient-to-b from-white to-[#d8d8d8] text-center leading-4 whitespace-nowrap text-[#d01010] shadow-[0_1px_0_#808080] " + w}>{t}</button>
          ))}
        </div>
        <div className="flex w-[74px] justify-end gap-1 pr-1.5">
          {["最小化", "最大化", "关闭"].map((t) => <button key={t} aria-label={t} className="h-[18px] w-[18px] rounded-full border-2 border-[#808080] bg-[#e0e0e0]" />)}
        </div>
      </header>

      <div className="flex">
        <div className="flex min-w-0 flex-1 flex-col border-l border-[#303030]">
          <div className="flex flex-1">
            <nav className="w-[18px] shrink-0 border-r border-[#b00000]" aria-label="视图">
              {sideTabs.map(({ t, h, on }) => (
                <button key={t} className={"flex w-full flex-col items-center justify-center border-b border-[#b00000] pt-0.5 text-xs leading-3 " + h + (on ? " bg-[#b02800] text-white" : " text-[#c0c0c0]")}>
                  {t.split("").map((c) => <span key={c}>{c}</span>)}
                </button>
              ))}
            </nav>
            <main className="min-w-0 flex-1">
              <div className="flex h-[22px] border-b border-[#b00000] text-xs text-[#c0c0c0]">
                <div className="flex flex-1 items-center gap-[10px] pl-1">
                  {periods.map((p, i) => <button key={p} className={i === 0 ? "text-[#00e0e0]" : ""}>{p}</button>)}
                  <svg viewBox="0 0 6 10" className="h-[10px] w-1.5" fill="none" stroke="#c0c0c0" aria-hidden="true"><path d="M.5 .5l4.500 4.500l-4.500 4.500" /></svg>
                </div>
                {chartTools.map((t) => <button key={t} className="w-9 border-l border-[#b00000] whitespace-nowrap">{t}</button>)}
                <div className="w-px bg-[#b00000]" />
              </div>
              <div className="flex h-4">
                <div className="flex min-w-0 flex-1 pt-0.5"><Legend items={topLegend} /></div>
                <svg viewBox="0 0 28 16" className="h-4 w-7" fill="none" stroke="#b00000" aria-hidden="true">
                  <path d="M7 4l5 5l-5 5l-5-5zM16.500 4.500h9v10h-9zM21.500 4v10" />
                </svg>
                <div className="w-[52px] border-x border-[#b00000]" />
              </div>
              <PriceChart />
              <div className="flex h-[17px] border-t border-[#b00000]">
                <Legend items={lowLegend} />
                <div className="w-[52px] border-x-2 border-t border-[#b00000]" />
              </div>
              <ForceChart />
              <div className="flex h-[17px] border-t border-[#b00000] text-xs leading-4 whitespace-nowrap text-[#c0c0c0]">
                <button className="w-[30px] border-r border-[#b00000]">指标</button>
                <button className="w-[31px] border-r-2 border-[#b00000] bg-[#282828]">模板</button>
                <button className="w-[31px] border-r border-[#b00000] text-[#00e0e0]">管理</button>
                {templates.map((t) => (
                  <button key={t} className="border-r border-[#b00000] pr-[3px] pl-1">
                    {t === "先知MACD" ? <>先知<span className="font-['Liberation_Mono',monospace] text-[10px]">MACD</span></> : t}
                  </button>
                ))}
                <div className="flex-1" />
                <div className="flex w-[52px] border-r border-[#b00000]">
                  {["+", "−", "0"].map((t) => <button key={t} className="flex-1 border-l border-[#b00000]">{t}</button>)}
                </div>
              </div>
            </main>
          </div>
          <div className="flex h-[19px] border-y border-r border-[#b00000] text-xs leading-[17px] whitespace-nowrap">
            {extras.map(({ t, c }) => <button key={t} className={"border-r border-[#b00000] text-center " + c}>{t}</button>)}
          </div>
        </div>
        <QuotePanel />
        <ToolStrip />
      </div>

      <StatusBar />
      <TaskBar />

      <div className="absolute top-0 right-0 h-[57px] w-[222px] bg-white/92 pt-2 pl-1 whitespace-nowrap">
        <div className="flex items-center gap-2 leading-6">
          <b className="text-xl leading-6 text-[#1a1aff]">股海网</b>
          <span className="text-lg leading-6 text-[#202020]">股票软件资源分享</span>
        </div>
        <a href="#" className="block text-[22px] leading-5 font-bold text-[#e03000]">Www.Guhai.com.cn</a>
      </div>
    </div>
  );
}
